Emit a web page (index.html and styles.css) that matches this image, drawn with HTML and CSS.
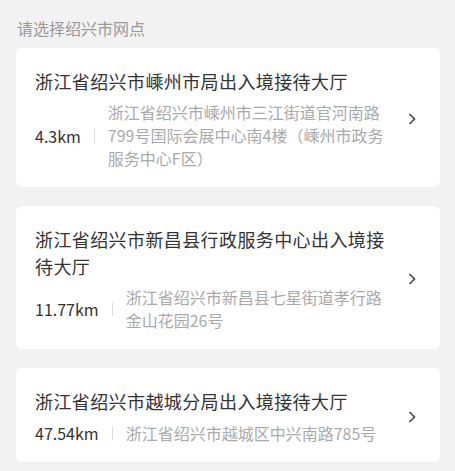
FILE: index.html
```html
<!DOCTYPE html>
<html>
<head>
    <title>选择网点</title>
    <link rel="stylesheet" href="styles.css">
</head>
<body>
    <div class="page">
        <div class="page-title">请选择绍兴市网点</div>

        <div class="site-list">
            <div class="site-card">
                <div class="site-main">
                    <div class="site-name">浙江省绍兴市嵊州市局出入境接待大厅</div>
                    <div class="site-meta">
                        <span class="site-distance">4.3km</span>
                        <span class="site-divider"></span>
                        <span class="site-address">浙江省绍兴市嵊州市三江街道官河南路799号国际会展中心南4楼（嵊州市政务服务中心F区）</span>
                    </div>
                </div>
                <svg class="site-arrow" width="8" height="12" viewBox="0 0 8 12">
                    <path d="M1.5 1 L6.5 6 L1.5 11" fill="none" stroke="#444" stroke-width="1.6"/>
                </svg>
            </div>

            <div class="site-card">
                <div class="site-main">
                    <div class="site-name">浙江省绍兴市新昌县行政服务中心出入境接待大厅</div>
                    <div class="site-meta">
                        <span class="site-distance">11.77km</span>
                        <span class="site-divider"></span>
                        <span class="site-address">浙江省绍兴市新昌县七星街道孝行路金山花园26号</span>
                    </div>
                </div>
                <svg class="site-arrow" width="8" height="12" viewBox="0 0 8 12">
                    <path d="M1.5 1 L6.5 6 L1.5 11" fill="none" stroke="#444" stroke-width="1.6"/>
                </svg>
            </div>

            <div class="site-card">
                <div class="site-main">
                    <div class="site-name">浙江省绍兴市越城分局出入境接待大厅</div>
                    <div class="site-meta">
                        <span class="site-distance">47.54km</span>
                        <span class="site-divider"></span>
                        <span class="site-address">浙江省绍兴市越城区中兴南路785号</span>
                    </div>
                </div>
                <svg class="site-arrow" width="8" height="12" viewBox="0 0 8 12">
                    <path d="M1.5 1 L6.5 6 L1.5 11" fill="none" stroke="#444" stroke-width="1.6"/>
                </svg>
            </div>
        </div>
    </div>
</body>
</html>
```

FILE: styles.css
```css
body {
    margin: 0;
    background-color: #f2f2f2;
    font-family: "Noto Sans CJK SC", "Noto Sans", sans-serif;
}
.page {
    padding: 16px 15px 0 16px;
}
.page-title {
    font-size: 16px;
    line-height: 24px;
    color: #999;
    padding-left: 1px;
    margin-bottom: 8px;
}
.site-list {
    display: flex;
    flex-direction: column;
    gap: 19px;
}
.site-card {
    display: flex;
    align-items: center;
    background-color: white;
    border-radius: 6px;
    padding: 20px 24px 17px 19px;
}
.site-main {
    flex: 1;
    min-width: 0;
    padding-right: 18px;
}
.site-name {
    font-size: 18px;
    line-height: 27px;
    letter-spacing: 0.4px;
    color: #333;
}
.site-meta {
    display: flex;
    align-items: center;
    margin-top: 6px;
}
.site-distance {
    font-size: 16px;
    color: #333;
    white-space: nowrap;
}
.site-divider {
    flex: none;
    width: 1px;
    height: 14px;
    background-color: #ddd;
    margin: 0 13px;
}
.site-address {
    font-size: 16px;
    line-height: 23px;
    color: #aaa;
}
.site-arrow {
    flex: none;
}
```
